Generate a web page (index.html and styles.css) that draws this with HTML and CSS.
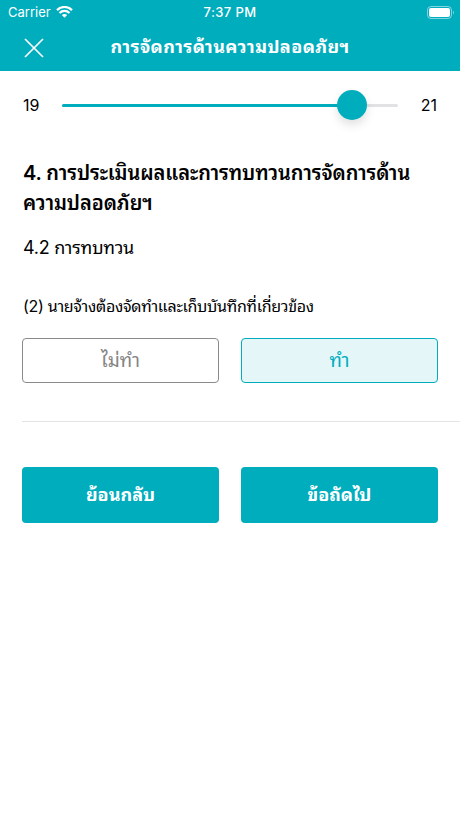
FILE: index.html
```html
<!DOCTYPE html>
<html lang="th">
<head>
    <meta charset="UTF-8">
    <meta name="viewport" content="width=device-width, initial-scale=1.0">
    <title>การจัดการด้านความปลอดภัยฯ</title>
    <link rel="stylesheet" href="styles.css">
</head>
<body>

    <header class="header">
        <div class="status-bar">
            <div class="carrier">
                <span class="carrier-name">Carrier</span>
                <svg class="wifi" width="17" height="12" viewBox="0 0 17 12">
                    <path d="M1 4.1 A10.6 10.6 0 0 1 16 4.1" fill="none" stroke="#fff" stroke-width="2.2"/>
                    <path d="M3.5 6.9 A7.1 7.1 0 0 1 13.5 6.9" fill="none" stroke="#fff" stroke-width="2.1"/>
                    <path d="M5.8 9.1 A4.1 4.1 0 0 1 11.2 9.1 L8.5 11.8 Z" fill="#fff"/>
                </svg>
            </div>
            <span class="time">7:37 PM</span>
            <svg class="battery" width="28" height="13" viewBox="0 0 28 13">
                <rect x="0.5" y="0.5" width="24" height="12" rx="3.5" fill="none" stroke="#fff" stroke-opacity="0.5"/>
                <rect x="2" y="2" width="21" height="9" rx="2" fill="#fff"/>
                <path d="M26 4.5 Q28 6.5 26 8.5 Z" fill="#fff" fill-opacity="0.5"/>
            </svg>
        </div>
        <div class="nav-bar">
            <svg class="close" width="20" height="20" viewBox="0 0 20 20">
                <path d="M1 1 L19 19 M19 1 L1 19" stroke="#fff" stroke-width="1.7"/>
            </svg>
            <h1 class="title">การจัดการด้านความปลอดภัยฯ</h1>
        </div>
    </header>

    <main class="content">
        <!-- Progress -->
        <div class="progress">
            <span class="number">19</span>
            <div class="track">
                <div class="fill" style="width: 86.3%"></div>
                <div class="knob"></div>
            </div>
            <span class="number">21</span>
        </div>

        <!-- Question -->
        <h2 class="heading"><span class="line">4. การประเมินผลและการทบทวนการจัดการด้าน</span> <span class="line">ความปลอดภัยฯ</span></h2>
        <h3 class="subheading">4.2 การทบทวน</h3>
        <p class="question">(2) นายจ้างต้องจัดทำและเก็บบันทึกที่เกี่ยวข้อง</p>

        <div class="buttons">
            <button class="option">ไม่ทำ</button>
            <button class="option selected">ทำ</button>
        </div>

        <hr class="divider">

        <!-- Navigation -->
        <div class="buttons">
            <button class="nav-button">ย้อนกลับ</button>
            <button class="nav-button">ข้อถัดไป</button>
        </div>
    </main>

</body>
</html>
```
FILE: styles.css
```css
* {
    box-sizing: border-box;
}

body {
    margin: 0;
    background-color: #fff;
    color: #000;
    font-family: Inter, "Noto Sans Thai Looped", "Noto Looped Thai", "Noto Sans", sans-serif;
}

.header {
    height: 71px;
    background-color: #00adbd;
    color: #fff;
}

.status-bar {
    display: grid;
    grid-template-columns: 1fr auto 1fr;
    align-items: center;
    height: 24px;
    padding: 0 5px 0 8px;
    font-size: 13px;
}

.carrier {
    display: flex;
    align-items: center;
    gap: 5px;
}

.time {
    margin-right: 3px;
    font-weight: 500;
    letter-spacing: 0.4px;
}

.battery {
    justify-self: end;
}

.nav-bar {
    display: grid;
    grid-template-columns: 20px 1fr 20px;
    align-items: center;
    height: 47px;
    padding: 0 24px;
}

.title {
    margin: 0;
    padding-bottom: 2px;
    text-align: center;
    font-size: 18px;
    font-weight: 700;
    letter-spacing: 0.4px;
    line-height: 30px;
    white-space: nowrap;
}

.content {
    padding: 14px 22px 0 23px;
}

.progress {
    display: flex;
    align-items: center;
    justify-content: space-between;
    height: 40px;
    padding-right: 1px;
    font-size: 16px;
}

.track {
    display: flex;
    align-items: center;
    width: 336px;
    height: 3px;
    background-color: #e2e2e4;
    border-radius: 2px;
}

.fill {
    height: 3px;
    background-color: #00adbd;
    border-radius: 2px;
}

.knob {
    width: 30px;
    height: 30px;
    margin-left: -15px;
    background-color: #00adbd;
    border-radius: 50%;
    box-shadow: 0 5px 10px rgba(0, 0, 0, 0.12);
}

.heading {
    margin: 33px 0 0;
    font-size: 20px;
    font-weight: 600;
    letter-spacing: -0.1px;
    line-height: 30px;
}

.line {
    display: block;
    white-space: nowrap;
}

.subheading {
    margin: 15px 0 0;
    font-size: 18px;
    font-weight: 400;
    letter-spacing: -0.25px;
    line-height: 30px;
}

.question {
    margin: 30px 0 19px;
    font-size: 16px;
    letter-spacing: -0.3px;
    line-height: 26px;
    white-space: nowrap;
}

.buttons {
    display: grid;
    grid-template-columns: 1fr 1fr;
    gap: 22px;
    margin-left: -1px;
}

.option {
    height: 45px;
    padding: 0 0 4px;
    background-color: #fff;
    border: 1px solid #8a8a8a;
    border-radius: 4px;
    color: #858585;
    font-family: inherit;
    font-size: 19px;
}

.option.selected {
    background-color: #e5f6f8;
    border-color: #00adbd;
    color: #00adbd;
}

.divider {
    height: 1px;
    margin: 38px -22px 45px -1px;
    background-color: #e4e4e4;
    border: none;
}

.nav-button {
    height: 56px;
    padding: 0 0 4px;
    background-color: #00adbd;
    border: none;
    border-radius: 4px;
    color: #fff;
    font-family: inherit;
    font-size: 18px;
    font-weight: 700;
}
```
